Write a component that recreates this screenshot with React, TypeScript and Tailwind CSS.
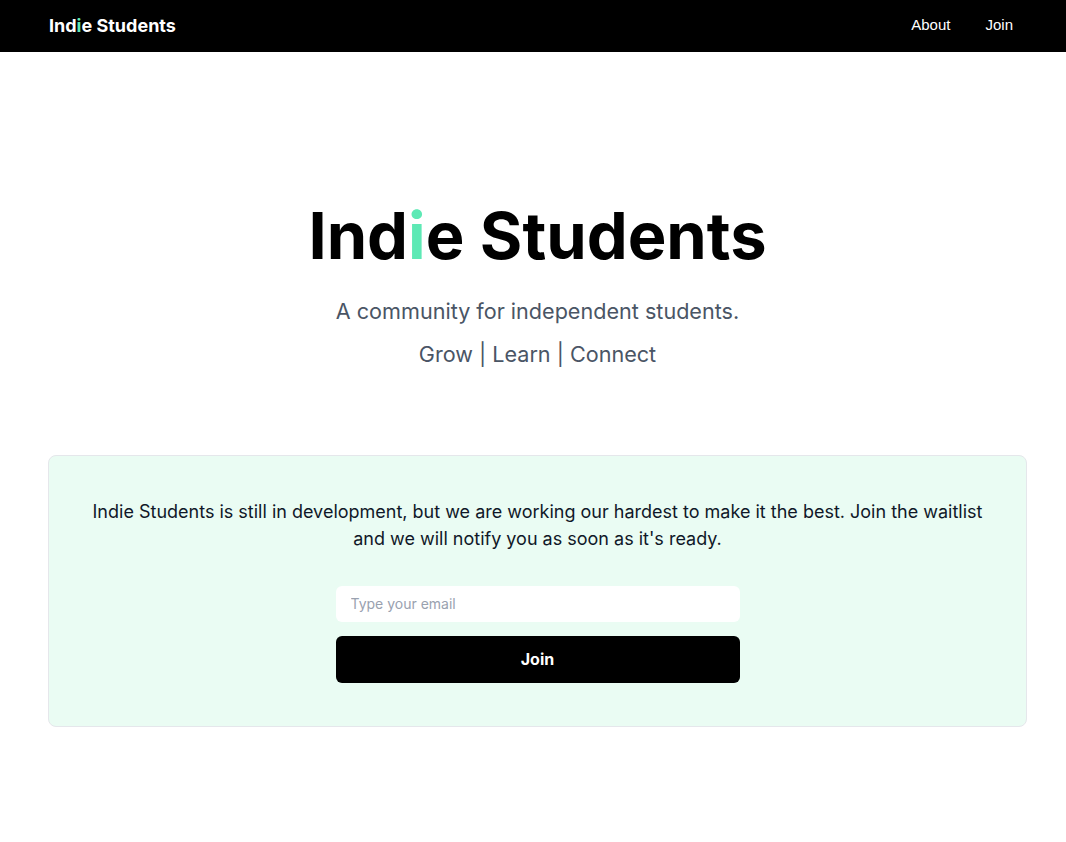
export default function App() {
  return (
    <div className="min-h-screen bg-white font-['Inter',sans-serif]">
      <nav className="flex h-[52px] items-center justify-between bg-black pl-[49px] pr-[53px]">
        <a className="text-lg font-bold text-white" href="#">
          Ind<span className="text-emerald-300">i</span>e Students
        </a>
        <div className="flex items-center gap-[35px] pb-[2px] font-['Liberation_Sans',sans-serif] text-[15px] text-white">
          <a href="#">About</a>
          <a href="#">Join</a>
        </div>
      </nav>

      <main className="pl-[48px] pr-[39px]">
        <section className="flex flex-col items-center pt-[151px] text-center">
          <h1 className="text-[65px] font-bold leading-none text-black">
            Ind<span className="text-emerald-300">i</span>e Students
          </h1>
          <p className="mt-[27px] text-[21.6px] text-gray-600">A community for independent students.</p>
          <p className="mt-[11px] text-[21.6px] text-gray-600">Grow | Learn | Connect</p>
        </section>

        <section className="mt-[84px] flex flex-col items-center rounded-lg border border-gray-200 bg-[#eafcf3] px-6 pt-[42px] pb-[43px]">
          <p className="text-center text-lg leading-[27px] text-gray-900">
            Indie Students is still in development, but we are working our hardest to make it the best. Join the waitlist
            <br />
            and we will notify you as soon as it's ready.
          </p>
          <form className="mt-[34px] flex w-[404px] flex-col gap-[14px]" onSubmit={(e) => e.preventDefault()}>
            <input
              type="email"
              placeholder="Type your email"
              className="h-[36px] rounded-md bg-white px-[15px] text-sm text-gray-900 placeholder:text-gray-400 outline-none"
            />
            <button type="submit" className="h-[47px] rounded-md bg-black text-base font-bold text-white">
              Join
            </button>
          </form>
        </section>
      </main>
    </div>
  );
}
